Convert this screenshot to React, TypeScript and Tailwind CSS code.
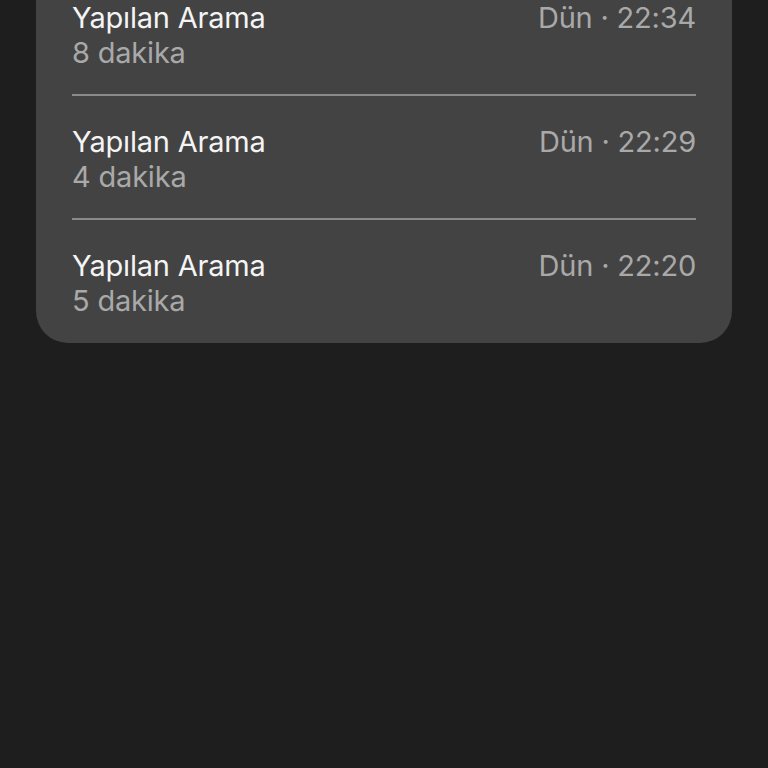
type CallEntry = {
  id: string;
  title: string;
  duration: string;
  time: string;
};

const calls: CallEntry[] = [
  { id: "c1", title: "Yapılan Arama", duration: "8 dakika", time: "Dün · 22:34" },
  { id: "c2", title: "Yapılan Arama", duration: "4 dakika", time: "Dün · 22:29" },
  { id: "c3", title: "Yapılan Arama", duration: "5 dakika", time: "Dün · 22:20" },
];

export default function App() {
  return (
    <div
      className="h-[768px] w-[768px] overflow-hidden bg-[#1e1e1e]"
      style={{ fontFamily: "Inter, 'Noto Sans', sans-serif" }}
    >
      <div className="mx-[36px] -mt-[28px] rounded-b-[32px] bg-[#434343] px-[36px] pb-[1px]">
        {calls.map((call, index) => (
          <div key={call.id}>
            {index > 0 ? <div className="h-[2px] bg-[#8a8a8a]" /> : null}
            <div className="flex justify-between pt-[28px] pb-[24px] text-[29px] leading-[35px] tracking-[-0.2px]">
              <div className="flex flex-col">
                <span className="text-[#f4f4f4]">{call.title}</span>
                <span className="text-[#a9a9a9]">{call.duration}</span>
              </div>
              <span className="text-[#a9a9a9]">{call.time}</span>
            </div>
          </div>
        ))}
      </div>
    </div>
  );
}
